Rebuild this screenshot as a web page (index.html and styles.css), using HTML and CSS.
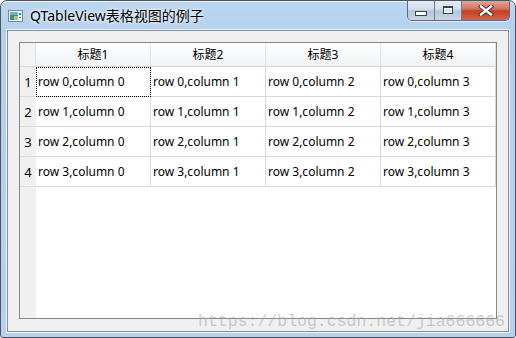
FILE: index.html
```html
<!DOCTYPE html>
<html>
	<head>
		<meta charset="utf-8">
		<title>QTableView表格视图的例子</title>
		<link rel="stylesheet" href="styles.css">
	</head>
	<body>
		<div class="window">
			<div class="titlebar">
				<svg class="appicon" width="15" height="12" viewBox="0 0 15 12">
					<rect x="0.5" y="0.5" width="14" height="11" fill="#f4f6f8" stroke="#7d8896"/>
					<rect x="2" y="2" width="8" height="8" fill="#3f8f86"/>
					<rect x="2" y="2" width="8" height="3" fill="#6fb3c9"/>
					<rect x="6" y="6" width="4" height="4" fill="#9ccf84"/>
					<rect x="11" y="3" width="2" height="2" fill="#2f6fd0"/>
					<rect x="11" y="7" width="2" height="1" fill="#2f6fd0"/>
				</svg>
				<span class="title">QTableView表格视图的例子</span>
				<div class="caption-buttons">
					<div class="cbtn cmin"><span class="minbar"></span></div>
					<div class="cbtn cmax"><span class="maxbox"></span></div>
					<div class="cbtn cclose">
						<svg width="16" height="11" viewBox="0 0 16 11">
							<path d="M3 1.5 L13 9.5 M13 1.5 L3 9.5" stroke="#3a2a2a" stroke-width="4.2" stroke-linecap="square"/>
							<path d="M3 1.5 L13 9.5 M13 1.5 L3 9.5" stroke="#ffffff" stroke-width="2.4" stroke-linecap="square"/>
						</svg>
					</div>
				</div>
			</div>
			<div class="client">
				<div class="tableview">
					<div class="row header">
						<div class="vh corner"></div>
						<div class="hcell">标题1</div>
						<div class="hcell">标题2</div>
						<div class="hcell">标题3</div>
						<div class="hcell">标题4</div>
					</div>
					<div class="row">
						<div class="vh">1</div>
						<div class="cell focus">row 0,column 0</div>
						<div class="cell">row 0,column 1</div>
						<div class="cell">row 0,column 2</div>
						<div class="cell">row 0,column 3</div>
					</div>
					<div class="row">
						<div class="vh">2</div>
						<div class="cell">row 1,column 0</div>
						<div class="cell">row 1,column 1</div>
						<div class="cell">row 1,column 2</div>
						<div class="cell">row 1,column 3</div>
					</div>
					<div class="row">
						<div class="vh">3</div>
						<div class="cell">row 2,column 0</div>
						<div class="cell">row 2,column 1</div>
						<div class="cell">row 2,column 2</div>
						<div class="cell">row 2,column 3</div>
					</div>
					<div class="row">
						<div class="vh">4</div>
						<div class="cell">row 3,column 0</div>
						<div class="cell">row 3,column 1</div>
						<div class="cell">row 3,column 2</div>
						<div class="cell">row 3,column 3</div>
					</div>
				</div>
			</div>
			<div class="watermark">https://blog.csdn.net/jia666666</div>
		</div>
	</body>
</html>
```

FILE: styles.css
```css
body {
	margin: 0;
	background: #ffffff;
	font: 12px "Noto Sans", "Noto Sans CJK SC", sans-serif;
}
.window {
	position: relative;
	width: 516px;
	height: 338px;
	box-sizing: border-box;
	border: 1px solid #4c5663;
	border-radius: 7px 7px 3px 3px;
	background: linear-gradient(#bcd6f0, #b2cfec 40px, #b7d2ee);
	box-shadow: inset 0 1px 0 rgba(255, 255, 255, 0.7);
	padding: 0 6px 5px 6px;
	display: flex;
	flex-direction: column;
	overflow: hidden;
}
.titlebar {
	height: 28px;
	display: flex;
	align-items: flex-start;
	position: relative;
}
.appicon {
	margin: 9px 0 0 1px;
}
.title {
	margin: 4px 0 0 7px;
	font-size: 14px;
	color: #000;
	font-family: "Noto Sans", "Noto Sans CJK SC", sans-serif;
	text-shadow: 0 0 6px rgba(255, 255, 255, 0.9), 0 0 3px rgba(255, 255, 255, 0.9);
}
.caption-buttons {
	position: absolute;
	right: -1px;
	top: -1px;
	display: flex;
	height: 20px;
	border: 1px solid #5d6b7e;
	border-top: none;
	border-radius: 0 0 5px 5px;
	overflow: hidden;
	box-shadow: 0 1px 0 rgba(255, 255, 255, 0.6);
}
.cbtn {
	height: 20px;
	display: flex;
	align-items: center;
	justify-content: center;
	box-sizing: border-box;
}
.cmin, .cmax {
	width: 27px;
	background: linear-gradient(#e7eef6, #d3dfec 45%, #b6c7da 55%, #c7d6e6);
	border-right: 1px solid #6f7d90;
}
.cclose {
	width: 47px;
	background: linear-gradient(#e8aa9e, #d7705e 45%, #c4401f 55%, #d1654a);
}
.minbar {
	width: 10px;
	height: 3px;
	margin-top: 7px;
	background: #fff;
	border: 1px solid #39434f;
}
.maxbox {
	width: 8px;
	height: 5px;
	border: 1px solid #39434f;
	border-top-width: 2px;
	background: #dfe7f0;
	box-shadow: inset 0 0 0 1px #fff;
}
.client {
	flex: 1;
	display: flex;
	background: #f0f0f0;
	border: 1px solid #838f9f;
	box-shadow: 0 0 0 1px rgba(255, 255, 255, 0.75);
	padding: 11px 11px 12px 11px;
	margin-top: 1px;
}
.tableview {
	flex: 1;
	border: 1px solid #828790;
	background: linear-gradient(to right, #f0f0f0 16px, #ffffff 16px);
}
.row {
	display: flex;
	height: 30px;
}
.row.header {
	height: 24px;
}
.vh {
	width: 16px;
	box-sizing: border-box;
	background: #f0f0f0;
	border-bottom: 1px solid #dadada;
	display: flex;
	align-items: center;
	justify-content: center;
	color: #000;
	font-size: 13px;
}
.vh.corner {
	background: #f3f3f3;
	border-right: 1px solid #e2e2e2;
}
.hcell {
	width: 115px;
	box-sizing: border-box;
	background: linear-gradient(#ffffff, #f7f8f9 50%, #f1f2f4);
	border-right: 1px solid #e2e3e5;
	border-bottom: 1px solid #d5d5d5;
	display: flex;
	align-items: center;
	justify-content: center;
	color: #000;
	padding-bottom: 1px;
}
.cell {
	width: 115px;
	box-sizing: border-box;
	background: #fff;
	border-right: 1px solid #d8d8d8;
	border-bottom: 1px solid #d8d8d8;
	padding-left: 2px;
	display: flex;
	align-items: center;
	color: #000;
	white-space: nowrap;
}
.cell.focus {
	outline: 1px dotted #000;
	outline-offset: -1px;
}
.watermark {
	position: absolute;
	right: 10px;
	bottom: 6px;
	font: 16.5px "Liberation Mono", monospace;
	color: rgba(170, 170, 170, 0.6);
}
```
